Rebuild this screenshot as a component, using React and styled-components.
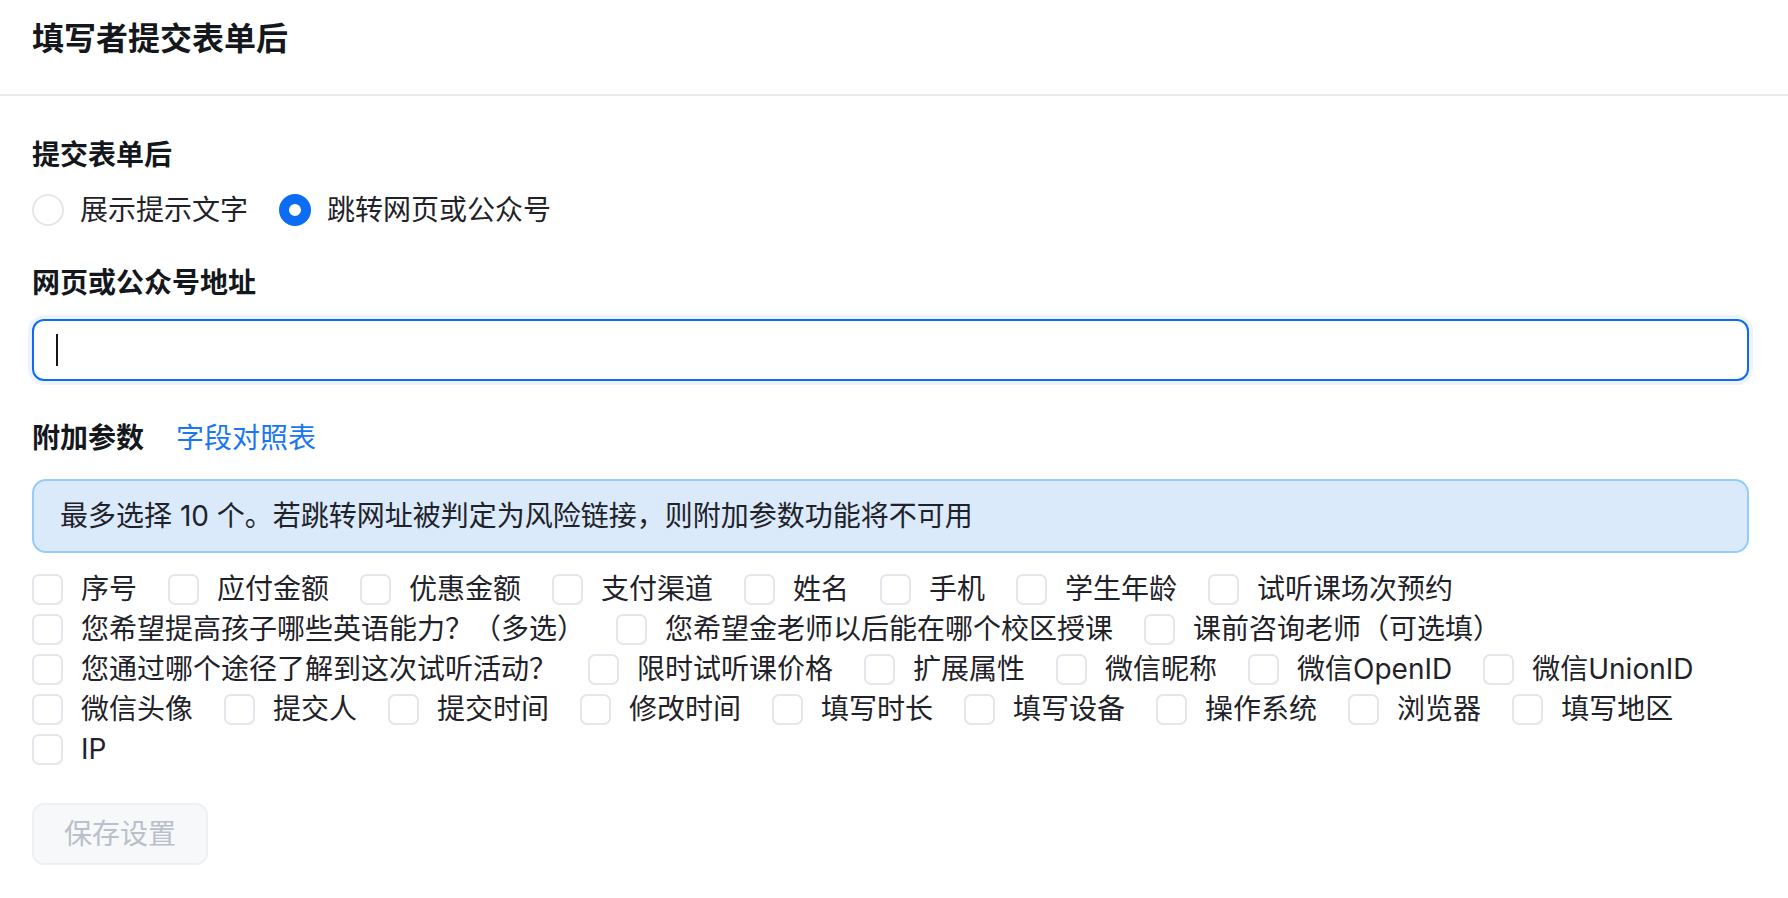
import React, { useState } from "react"
import styled, { createGlobalStyle } from "styled-components"

const GlobalStyle = createGlobalStyle`
  body {
    margin: 0;
    background: #ffffff;
    font-family: Inter, "Noto Sans CJK SC", sans-serif;
    color: #1f2329;
  }
`

const Page = styled.div`
  width: 100%;
`

const Header = styled.div`
  height: 96px;
  box-sizing: border-box;
  padding: 18px 32px 0;
  border-bottom: 2px solid #e8e8ed;
`

const Title = styled.h1`
  margin: 0;
  font-size: 32px;
  line-height: 42px;
  font-weight: 600;
  color: #14171c;
`

const Body = styled.div`
  padding: 39px 39px 0 32px;
  display: flex;
  flex-direction: column;
  align-items: flex-start;
  font-size: 28px;
  line-height: 40px;
`

const Label = styled.div`
  font-weight: 600;
  color: #14171c;
  margin-top: ${(p) => p.$top || 0}px;
`

const RadioGroup = styled.div`
  display: flex;
  align-items: center;
  gap: 31px;
  margin-top: 15px;
`

const RadioItem = styled.label`
  display: flex;
  align-items: center;
  gap: 16px;
  cursor: pointer;
`

const RadioDot = styled.span`
  width: 32px;
  height: 32px;
  box-sizing: border-box;
  border-radius: 50%;
  background: #fff;
  border: ${(p) => (p.$on ? "10px solid #0c6cf2" : "2px solid #e5e6eb")};
`

const Field = styled.div`
  align-self: stretch;
  margin-top: 16px;
  height: 62px;
  box-sizing: border-box;
  display: flex;
  align-items: center;
  padding-left: 22px;
  border: 2px solid #0c6cf2;
  border-radius: 12px;
  box-shadow: 0 0 0 4px #edf4fe;
`

const Caret = styled.span`
  width: 2px;
  height: 32px;
  background: #14171c;
`

const Input = styled.input`
  flex: 1;
  border: none;
  outline: none;
  background: transparent;
  font: inherit;
  padding: 0;
`

const ParamRow = styled.div`
  display: flex;
  align-items: center;
  gap: 32px;
  margin-top: 37px;
`

const Link = styled.a`
  color: #1a77f2;
  text-decoration: none;
  cursor: pointer;
`

const Alert = styled.div`
  align-self: stretch;
  margin-top: 21px;
  box-sizing: border-box;
  padding: 15px 26px;
  background: #dbeafb;
  border: 2px solid #95ccfa;
  border-radius: 14px;
  color: #1f2329;
`

const Options = styled.div`
  align-self: stretch;
  margin-top: 16px;
  display: flex;
  flex-wrap: wrap;
  column-gap: 31px;
`

const Option = styled.label`
  display: flex;
  align-items: center;
  gap: 18px;
  height: 40px;
  cursor: pointer;
  white-space: nowrap;
`

const Box = styled.span`
  width: 31px;
  height: 31px;
  box-sizing: border-box;
  border: 2px solid #e5e6eb;
  border-radius: 7px;
  background: ${(p) => (p.$on ? "#0c6cf2" : "#fff")};
`

const SaveButton = styled.button`
  margin-top: 34px;
  height: 62px;
  padding: 0 30px;
  font: inherit;
  font-size: 28px;
  color: #b9c0cb;
  background: #f7f8fa;
  border: 2px solid #eef0f3;
  border-radius: 12px;
  cursor: not-allowed;
`

const fields = [
  "序号",
  "应付金额",
  "优惠金额",
  "支付渠道",
  "姓名",
  "手机",
  "学生年龄",
  "试听课场次预约",
  "您希望提高孩子哪些英语能力？（多选）",
  "您希望金老师以后能在哪个校区授课",
  "课前咨询老师（可选填）",
  "您通过哪个途径了解到这次试听活动？",
  "限时试听课价格",
  "扩展属性",
  "微信昵称",
  "微信OpenID",
  "微信UnionID",
  "微信头像",
  "提交人",
  "提交时间",
  "修改时间",
  "填写时长",
  "填写设备",
  "操作系统",
  "浏览器",
  "填写地区",
  "IP",
]

export default function App() {
  const [mode, setMode] = useState("jump")
  const [picked, setPicked] = useState([])

  const toggle = (name) =>
    setPicked((list) =>
      list.includes(name) ? list.filter((n) => n !== name) : [...list, name]
    )

  return (
    <Page>
      <GlobalStyle />
      <Header>
        <Title>填写者提交表单后</Title>
      </Header>
      <Body>
        <Label>提交表单后</Label>
        <RadioGroup>
          <RadioItem onClick={() => setMode("text")}>
            <RadioDot $on={mode === "text"} />
            展示提示文字
          </RadioItem>
          <RadioItem onClick={() => setMode("jump")}>
            <RadioDot $on={mode === "jump"} />
            跳转网页或公众号
          </RadioItem>
        </RadioGroup>

        <Label $top={33}>网页或公众号地址</Label>
        <Field>
          <Caret />
          <Input />
        </Field>

        <ParamRow>
          <Label>附加参数</Label>
          <Link>字段对照表</Link>
        </ParamRow>
        <Alert>最多选择 10 个。若跳转网址被判定为风险链接，则附加参数功能将不可用</Alert>

        <Options>
          {fields.map((name) => (
            <Option key={name} onClick={() => toggle(name)}>
              <Box $on={picked.includes(name)} />
              {name}
            </Option>
          ))}
        </Options>

        <SaveButton disabled>保存设置</SaveButton>
      </Body>
    </Page>
  )
}
